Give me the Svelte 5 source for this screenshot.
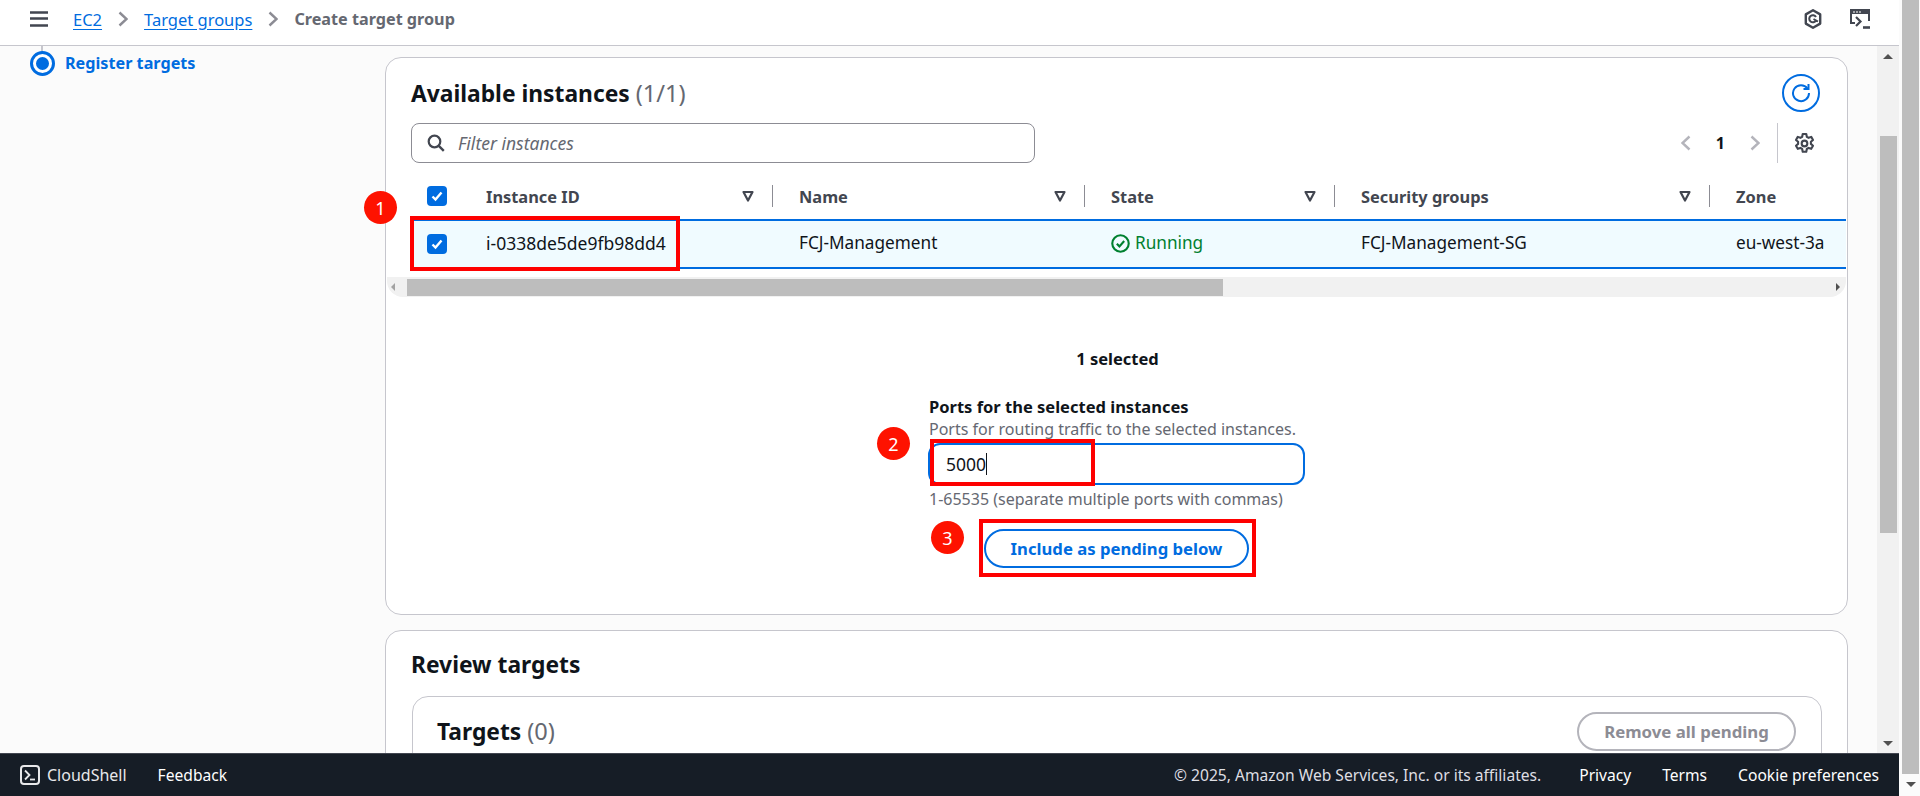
<script lang="ts">
	const columns = [
		{ label: 'Instance ID', sortable: true },
		{ label: 'Name', sortable: true },
		{ label: 'State', sortable: true },
		{ label: 'Security groups', sortable: true },
		{ label: 'Zone', sortable: false }
	];
</script>

{#snippet caret()}
	<svg class="caret" width="12" height="12" viewBox="0 0 12 12"><path d="M1.5 2h9L6 10.500z" fill="none" stroke="#424650" stroke-width="2.200" stroke-linejoin="round" /></svg>
{/snippet}

{#snippet checkbox()}
	<span class="check">
		<svg width="14" height="14" viewBox="0 0 14 14"><path d="M2.500 7.500l3 3 6-7" fill="none" stroke="#fff" stroke-width="2.400" /></svg>
	</span>
{/snippet}

<div class="screen">
	<div class="page">
		<header class="topbar">
			<svg class="burger" width="18" height="16" viewBox="0 0 18 16"><path d="M0 1.500h18M0 7.500h18M0 14.500h18" stroke="#424650" stroke-width="2.400" /></svg>
			<nav class="crumbs">
				<a href="#ec2">EC2</a>
				<svg width="10" height="16" viewBox="0 0 10 16"><path d="M1.500 1.500L8.500 8l-7 6.500" fill="none" stroke="#8c8c94" stroke-width="2.400" /></svg>
				<a href="#tg">Target groups</a>
				<svg width="10" height="16" viewBox="0 0 10 16"><path d="M1.500 1.500L8.500 8l-7 6.500" fill="none" stroke="#8c8c94" stroke-width="2.400" /></svg>
				<span class="crumb-current">Create target group</span>
			</nav>
			<div class="top-icons">
				<svg width="18" height="20" viewBox="0 0 18 20"><path d="M9 1.200l7.200 4.200v9.200L9 18.800l-7.200-4.200V5.400z" fill="none" stroke="#424650" stroke-width="2.400" stroke-linejoin="round" /><path d="M12 11.500A3.600 3.600 0 1 1 12 8M9.500 10l4.500 2.500" fill="none" stroke="#424650" stroke-width="2" /></svg>
				<svg width="20" height="20" viewBox="0 0 20 20"><path d="M5 14H1V1h18v11" fill="none" stroke="#424650" stroke-width="2" /><path d="M1 1h18v4H1z" fill="#424650" /><path d="M3 3h2M6 3h2M9 3h2" stroke="#fff" stroke-width="1" /><path d="M6 8l4.500 4.500L6 17" fill="none" stroke="#424650" stroke-width="2.200" /><path d="M13 18.500h7" stroke="#424650" stroke-width="2.600" /></svg>
			</div>
		</header>

		<div class="body">
			<aside class="steps">
				<span class="step-line"></span>
				<div class="step">
					<span class="radio"></span>
					<span>Register targets</span>
				</div>
			</aside>

			<main class="content">
				<section class="card instances">
					<div class="card-head">
						<h2>Available instances <span class="count">(1/1)</span></h2>
						<button class="refresh" aria-label="Refresh">
							<svg width="20" height="20" viewBox="0 0 20 20"><path d="M16.500 5.500A8 8 0 1 0 18 10" fill="none" stroke="#006ce0" stroke-width="2" /><path d="M17.500 1v5h-5" fill="none" stroke="#006ce0" stroke-width="2" /></svg>
						</button>
					</div>

					<div class="filter-row">
						<div class="filter">
							<svg width="18" height="18" viewBox="0 0 18 18"><circle cx="7.500" cy="7.500" r="5.800" fill="none" stroke="#424650" stroke-width="2.200" /><path d="M11.800 11.800l5 5" stroke="#424650" stroke-width="2.400" /></svg>
							<span>Filter instances</span>
						</div>
						<div class="pager">
							<svg width="10" height="16" viewBox="0 0 10 16"><path d="M8.500 1.500L1.500 8l7 6.500" fill="none" stroke="#b4b4bb" stroke-width="2.400" /></svg>
							<span class="page-num">1</span>
							<svg width="10" height="16" viewBox="0 0 10 16"><path d="M1.500 1.500L8.500 8l-7 6.500" fill="none" stroke="#b4b4bb" stroke-width="2.400" /></svg>
						</div>
						<div class="prefs">
							<svg width="21" height="21" viewBox="0 0 20 20"><path d="M8.300 1h3.400l.5 2.600 1.700 1 2.500-.9 1.700 3-2 1.700v2l2 1.700-1.700 3-2.500-.9-1.700 1-.5 2.600H8.300l-.5-2.600-1.700-1-2.500.9-1.700-3 2-1.700v-2l-2-1.700 1.700-3 2.500.9 1.700-1z" fill="none" stroke="#424650" stroke-width="2" stroke-linejoin="round" /><circle cx="10" cy="10" r="2.700" fill="none" stroke="#424650" stroke-width="2" /></svg>
						</div>
					</div>

					<div class="table">
						<div class="row head">
							<div class="cell-check">{@render checkbox()}<span class="divider"></span></div>
							{#each columns as col}
								<div class="th">
									<span>{col.label}</span>
									{#if col.sortable}
										{@render caret()}
										<span class="divider"></span>
									{/if}
								</div>
							{/each}
						</div>
						<div class="row selected">
							<div class="cell-check">{@render checkbox()}</div>
							<div class="td instance-id">i-0338de5de9fb98dd4</div>
							<div class="td">FCJ-Management</div>
							<div class="td running">
								<svg width="19" height="19" viewBox="0 0 18 18"><circle cx="9" cy="9" r="7.800" fill="none" stroke="#00802f" stroke-width="2" /><path d="M5.500 9.200l2.500 2.500 4.500-5" fill="none" stroke="#00802f" stroke-width="2" /></svg>
								Running
							</div>
							<div class="td">FCJ-Management-SG</div>
							<div class="td">eu-west-3a</div>
						</div>
						<div class="hscroll">
							<span class="arrow-left"></span>
							<span class="hthumb"></span>
							<span class="arrow-right"></span>
						</div>
					</div>

					<p class="selected-count">1 selected</p>

					<div class="ports">
						<div class="field-label">Ports for the selected instances</div>
						<div class="field-desc">Ports for routing traffic to the selected instances.</div>
						<div class="port-input"><span>5000</span><span class="cursor"></span></div>
						<div class="field-desc hint">1-65535 (separate multiple ports with commas)</div>
						<button class="include">Include as pending below</button>
					</div>
				</section>

				<section class="card review">
					<h2>Review targets</h2>
					<div class="card inner">
						<h2 class="targets">Targets <span class="count">(0)</span></h2>
						<button class="remove">Remove all pending</button>
					</div>
				</section>
			</main>

			<div class="vscroll inner-bar">
				<span class="arrow-up"></span>
				<span class="vthumb-slot"><span class="vthumb"></span></span>
				<span class="arrow-down"></span>
			</div>
		</div>

		<footer class="footer">
			<div class="footer-left">
				<svg width="20" height="20" viewBox="0 0 20 20"><rect x="1" y="1" width="18" height="18" rx="3" fill="none" stroke="#e8e8ea" stroke-width="2" /><path d="M5 5.500L9.500 10 5 14.500" fill="none" stroke="#e8e8ea" stroke-width="1.800" /><path d="M10 14.500h5" stroke="#e8e8ea" stroke-width="1.800" /></svg>
				<span class="shell">CloudShell</span>
				<span class="feedback">Feedback</span>
			</div>
			<div class="footer-right">
				<span class="copy">© 2025, Amazon Web Services, Inc. or its affiliates.</span>
				<span>Privacy</span>
				<span>Terms</span>
				<span>Cookie preferences</span>
			</div>
		</footer>
	</div>

	<div class="outer-bar">
		<span class="outer-thumb"></span>
		<span class="arrow-down"></span>
	</div>

	<!-- annotations drawn over the screenshot -->
	<span class="mark box-1"></span>
	<span class="mark box-2"></span>
	<span class="mark box-3"></span>
	<span class="badge badge-1">1</span>
	<span class="badge badge-2">2</span>
	<span class="badge badge-3">3</span>
</div>

<style>
	:global(body) {
		margin: 0;
		overflow: hidden;
		background: #fff;
	}

	.screen {
		position: relative;
		display: flex;
		width: 1920px;
		height: 796px;
		overflow: hidden;
		font-family: 'Noto Sans', sans-serif;
		font-size: 16px;
		color: #0f141a;
	}

	.page {
		display: flex;
		flex-direction: column;
		width: 1899px;
		height: 796px;
	}

	.topbar {
		display: flex;
		align-items: center;
		flex: none;
		height: 38px;
		padding: 0 29px 7px 30px;
		background: #fff;
		border-bottom: 1px solid #c6c6cd;
		box-sizing: content-box;
	}

	.burger {
		margin-right: 25px;
	}

	.crumbs {
		display: flex;
		align-items: center;
		gap: 16px;
		font-size: 16.500px;
	}

	.crumbs a {
		color: #006ce0;
		text-decoration: underline;
		text-underline-offset: 3px;
	}

	.crumb-current {
		font-size: 16.200px;
		font-weight: 700;
		color: #656871;
	}

	.top-icons {
		display: flex;
		align-items: center;
		gap: 28px;
		margin-left: auto;
	}

	.body {
		display: flex;
		flex: 1;
		min-height: 0;
		background: #fbfbfb;
	}

	.steps {
		flex: none;
		width: 385px;
		padding-left: 30px;
		box-sizing: border-box;
	}

	.step-line {
		display: block;
		width: 2px;
		height: 8px;
		margin-left: 11px;
		background: #c6c6cd;
	}

	.step {
		display: flex;
		align-items: center;
		gap: 13px;
		font-weight: 700;
		color: #006ce0;
		font-size: 16.200px;
		line-height: 19px;
	}

	.radio {
		width: 13px;
		height: 13px;
		border-radius: 50%;
		background: #006ce0;
		border: 3px solid #fff;
		outline: 3px solid #006ce0;
		margin-left: 3px;
	}

	.content {
		flex: none;
		width: 1463px;
		padding-top: 11px;
		overflow: hidden;
	}

	.card {
		background: #fff;
		border: 1px solid #c6c6cd;
		border-radius: 16px;
		box-sizing: border-box;
	}

	.instances {
		height: 558px;
		margin-bottom: 15px;
		padding: 0 1px 0 25px;
	}

	h2 {
		margin: 0;
		font-size: 22.800px;
		line-height: 28px;
		font-weight: 700;
	}

	.count {
		font-size: 23.600px;
		font-weight: 400;
		color: #656871;
	}

	.card-head {
		display: flex;
		justify-content: space-between;
		align-items: center;
		height: 65px;
		padding-right: 25px;
		padding-top: 5px;
		box-sizing: border-box;
	}

	.refresh {
		display: flex;
		align-items: center;
		justify-content: center;
		width: 38px;
		height: 38px;
		margin-right: 1px;
		padding: 0;
		background: #fff;
		border: 2px solid #006ce0;
		border-radius: 50%;
	}

	.filter-row {
		display: flex;
		align-items: center;
		height: 40px;
	}

	.filter {
		display: flex;
		align-items: center;
		gap: 13px;
		width: 624px;
		height: 40px;
		padding-left: 15px;
		box-sizing: border-box;
		background: #fff;
		border: 1px solid #8c8c94;
		border-radius: 8px;
		font-style: italic;
		font-size: 17.500px;
		color: #656871;
	}

	.pager {
		display: flex;
		align-items: center;
		margin-left: auto;
		gap: 25px;
		padding-right: 17px;
	}

	.page-num {
		font-weight: 700;
		font-size: 16px;
	}

	.prefs {
		display: flex;
		align-items: center;
		height: 40px;
		padding: 0 31px 0 16px;
		border-left: 1px solid #c6c6cd;
	}

	.table {
		margin-top: 12px;
		margin-left: 1px;
	}

	.row {
		display: grid;
		grid-template-columns: 48px 313px 312px 250px 375px 135px;
		align-items: center;
	}

	.head {
		height: 42px;
		margin-bottom: 2px;
		font-weight: 700;
		font-size: 16.400px;
		color: #424650;
	}

	.cell-check {
		display: flex;
		align-items: center;
		padding-left: 15px;
	}

	.cell-check .divider {
		margin-left: 13px;
	}

	.check {
		display: flex;
		align-items: center;
		justify-content: center;
		width: 20px;
		height: 20px;
		background: #006ce0;
		border-radius: 4px;
		flex: none;
	}

	.divider {
		display: block;
		width: 1px;
		height: 22px;
		background: #8c8c94;
	}

	.th {
		display: flex;
		align-items: center;
		padding-left: 26px;
	}

	.caret {
		margin-left: auto;
		margin-right: 18px;
	}

	.selected {
		height: 50px;
		box-sizing: border-box;
		background: #f0fbff;
		border-top: 2px solid #006ce0;
		border-bottom: 2px solid #006ce0;
		font-size: 17.200px;
		line-height: 22px;
	}

	.td {
		padding-left: 26px;
		padding-bottom: 2px;
	}

	.instance-id {
		font-size: 17.500px;
	}

	.running {
		display: flex;
		align-items: center;
		gap: 5px;
		color: #00802f;
	}

	.hscroll {
		display: flex;
		align-items: center;
		height: 20px;
		margin: 8px 0 0 -25px;
		background: #f1f1f1;
		border-radius: 0 0 16px 16px;
	}

	.hthumb {
		width: 816px;
		height: 17px;
		margin-left: 12px;
		background: #bdbdbd;
	}

	.arrow-left,
	.arrow-right {
		width: 0;
		height: 0;
		border-top: 4px solid transparent;
		border-bottom: 4px solid transparent;
	}

	.arrow-left {
		margin-left: 4px;
		border-right: 4px solid #a3a3a3;
	}

	.arrow-right {
		margin-left: auto;
		margin-right: 6px;
		border-left: 4px solid #505050;
	}

	.selected-count {
		margin: 51px 0 0;
		padding-right: 22px;
		text-align: center;
		font-weight: 700;
		font-size: 16.500px;
		line-height: 22px;
	}

	.ports {
		display: flex;
		flex-direction: column;
		align-items: flex-start;
		width: 377px;
		margin: 26px 0 0 517px;
	}

	.field-label {
		font-weight: 700;
		font-size: 16.500px;
		line-height: 22px;
		margin-left: 1px;
	}

	.field-desc {
		font-size: 16px;
		line-height: 20px;
		margin-top: 1px;
		color: #656871;
		margin-left: 1px;
		white-space: nowrap;
	}

	.port-input {
		display: flex;
		align-items: center;
		width: 100%;
		height: 42px;
		margin-top: 4px;
		padding-left: 16px;
		box-sizing: border-box;
		border: 2px solid #006ce0;
		border-radius: 12px;
		font-size: 17.500px;
	}

	.cursor {
		width: 1px;
		height: 22px;
		background: #0f141a;
	}

	.hint {
		margin-top: 4px;
	}

	.include {
		align-self: flex-start;
		width: 265px;
		height: 39px;
		margin: 20px 0 0 56px;
		padding: 0;
		background: #fff;
		border: 2px solid #006ce0;
		border-radius: 20px;
		color: #006ce0;
		font: 700 16.700px 'Noto Sans', sans-serif;
	}

	.review {
		position: relative;
		height: 320px;
		padding: 20px 25px 0;
	}

	.inner {
		display: flex;
		justify-content: space-between;
		height: 200px;
		margin: 17px 0 0 1px;
		padding: 15px 25px 0 24px;
	}

	.targets {
		margin-top: 5px;
	}

	.remove {
		width: 219px;
		height: 39px;
		padding: 0;
		background: #fff;
		border: 2px solid #b4b4bb;
		border-radius: 20px;
		color: #8c8c94;
		font: 700 16.800px 'Noto Sans', sans-serif;
	}

	.vscroll {
		display: flex;
		flex-direction: column;
		align-items: center;
		flex: none;
		width: 22px;
		margin-left: 29px;
		background: #f1f1f1;
		overflow: hidden;
	}

	.arrow-up,
	.arrow-down {
		flex: none;
		width: 0;
		height: 0;
		border-left: 5px solid transparent;
		border-right: 5px solid transparent;
	}

	.arrow-up {
		margin-top: 8px;
		border-bottom: 5px solid #505050;
	}

	.arrow-down {
		margin: 0 0 7px;
		border-top: 5px solid #505050;
	}

	.vthumb-slot {
		flex: 1;
		width: 100%;
		padding-top: 77px;
		box-sizing: border-box;
	}

	.vthumb {
		display: block;
		width: 17px;
		height: 397px;
		margin: 0 auto;
		background: #bdbdbd;
	}

	.footer {
		display: flex;
		justify-content: space-between;
		align-items: center;
		flex: none;
		height: 43px;
		padding: 0 20px;
		box-sizing: border-box;
		background: #161d26;
		border-top: 1px solid #424650;
		color: #fff;
		font-size: 15.600px;
	}

	.footer-left {
		display: flex;
		align-items: center;
	}

	.shell {
		margin-left: 7px;
		color: #e8e8ea;
		font-size: 16px;
	}

	.feedback {
		margin-left: 31px;
	}

	.footer-right {
		display: flex;
		gap: 31px;
	}

	.copy {
		margin-right: 7px;
		color: #dedee3;
	}

	.outer-bar {
		display: flex;
		flex-direction: column;
		align-items: center;
		flex: 1;
		padding-left: 2px;
		background: #fbfbfb;
	}

	.outer-thumb {
		display: block;
		width: 17px;
		height: 774px;
		margin-bottom: 8px;
		background: #bdbdbd;
	}

	.mark {
		position: absolute;
		box-sizing: border-box;
		border: 4px solid #fe0000;
	}

	.box-1 {
		left: 410px;
		top: 216px;
		width: 270px;
		height: 55px;
	}

	.box-2 {
		left: 930px;
		top: 439px;
		width: 165px;
		height: 47px;
	}

	.box-3 {
		left: 979px;
		top: 519px;
		width: 277px;
		height: 58px;
	}

	.badge {
		position: absolute;
		display: flex;
		align-items: center;
		justify-content: center;
		width: 33px;
		height: 33px;
		border-radius: 50%;
		background: #fe1200;
		color: #fff;
		font-size: 18px;
	}

	.badge-1 {
		left: 364px;
		top: 191px;
	}

	.badge-2 {
		left: 877px;
		top: 427px;
	}

	.badge-3 {
		left: 931px;
		top: 521px;
	}
</style>
